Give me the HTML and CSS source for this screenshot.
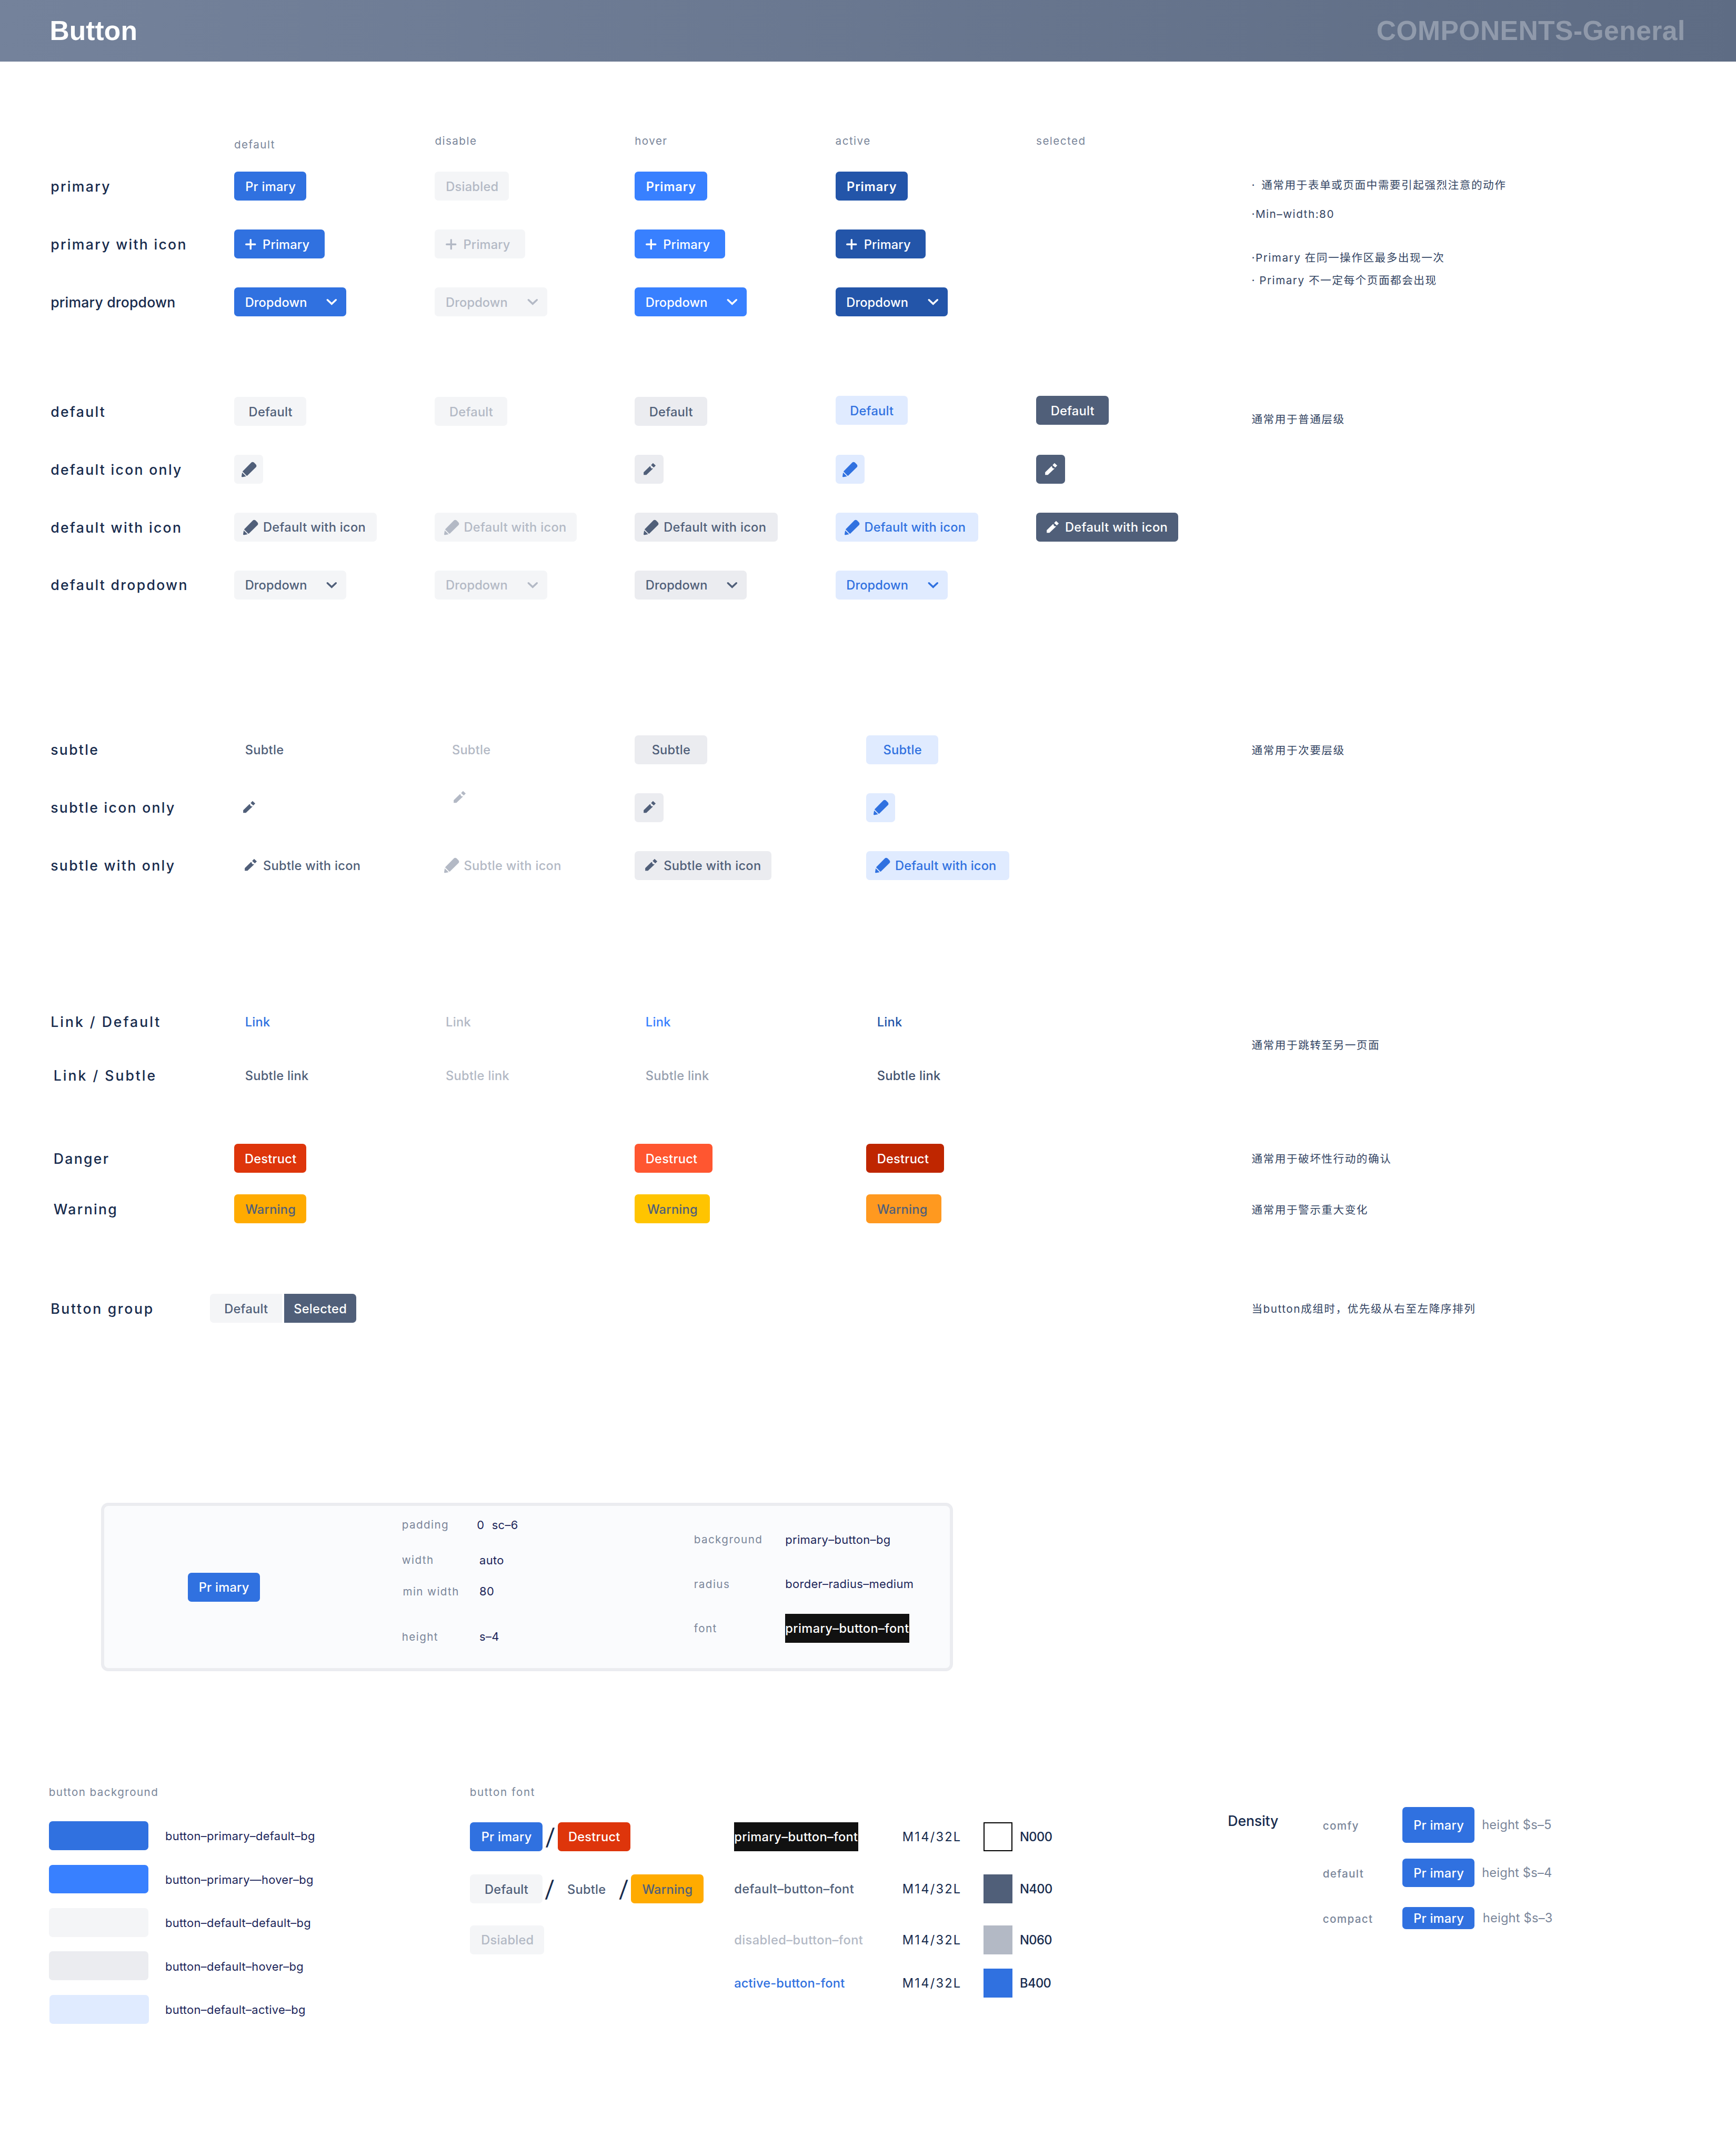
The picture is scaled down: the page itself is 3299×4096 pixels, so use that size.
FILE: index.html
```html
<!DOCTYPE html>
<html lang="zh-CN">
<head>
<meta charset="utf-8">
<title>Button</title>
<link rel="stylesheet" href="styles.css">
</head>
<body>
<svg class="sprite" aria-hidden="true">
  <symbol id="plus" viewBox="0 0 24 24"><path d="M12 2v20M2 12h20" fill="none" stroke="currentColor" stroke-width="4" stroke-linecap="round"/></symbol>
  <symbol id="chevron" viewBox="0 0 24 16"><path d="M2.7 3.2 12 12l9.3-8.8" fill="none" stroke="currentColor" stroke-width="4" stroke-linecap="round"/></symbol>
  <symbol id="pencil" viewBox="48 48 96 96"><path d="M59 115 101 74 105 78 106 84 112 90 119 89 121 91 77 133H59ZM108 68 121 54 139 71 126 84Z" fill="currentColor"/></symbol>
  <symbol id="marker" viewBox="48 48 96 96" overflow="visible"><path d="M56 108 111 52Q120 44 130 50L143 63Q151 73 144 81L87 137Q84 140 81 137L56 112Q54 110 56 108ZM52 117 78 142 56 147H52Q48 147 48 143Z" fill="currentColor"/></symbol>
</svg>

<header class="banner">
  <h1 class="banner-title">Button</h1>
  <span class="banner-crumb">COMPONENTS-General</span>
</header>

<main>
  <div class="row heads">
    <span></span><span class="head low">default</span><span class="head">disable</span><span class="head">hover</span><span class="head">active</span><span class="head">selected</span>
  </div>

  <section class="group g-primary">
    <div class="rows">
      <div class="row">
        <span class="label">primary</span>
        <button class="btn primary">Pr imary</button>
        <button class="btn muted w164">Dsiabled</button>
        <button class="btn primary-hover bold">Primary</button>
        <button class="btn primary-active bold">Primary</button>
      </div>
      <div class="row">
        <span class="label">primary with icon</span>
        <button class="btn primary add"><svg><use href="#plus"/></svg>Primary</button>
        <button class="btn muted add"><svg><use href="#plus"/></svg>Primary</button>
        <button class="btn primary-hover add"><svg><use href="#plus"/></svg>Primary</button>
        <button class="btn primary-active add"><svg><use href="#plus"/></svg>Primary</button>
      </div>
      <div class="row">
        <span class="label tight">primary dropdown</span>
        <button class="btn primary drop">Dropdown<svg><use href="#chevron"/></svg></button>
        <button class="btn muted drop">Dropdown<svg><use href="#chevron"/></svg></button>
        <button class="btn primary-hover drop">Dropdown<svg><use href="#chevron"/></svg></button>
        <button class="btn primary-active drop">Dropdown<svg><use href="#chevron"/></svg></button>
      </div>
    </div>
    <div class="notes">
      <p class="n1">· 通常用于表单或页面中需要引起强烈注意的动作</p>
      <p class="n2">·Min–width:80</p>
      <p class="n3">·Primary 在同一操作区最多出现一次</p>
      <p class="n4">· Primary 不一定每个页面都会出现</p>
    </div>
  </section>

  <section class="group g-default">
    <div class="rows">
      <div class="row">
        <span class="label">default</span>
        <button class="btn plain">Default</button>
        <button class="btn muted">Default</button>
        <button class="btn plain-hover">Default</button>
        <button class="btn plain-active raised">Default</button>
        <button class="btn selected raised">Default</button>
      </div>
      <div class="row">
        <span class="label">default icon only</span>
        <button class="btn plain icon"><svg><use href="#marker"/></svg></button>
        <span></span>
        <button class="btn plain-hover icon"><svg><use href="#pencil"/></svg></button>
        <button class="btn plain-active icon"><svg><use href="#marker"/></svg></button>
        <button class="btn selected icon"><svg><use href="#pencil"/></svg></button>
      </div>
      <div class="row">
        <span class="label">default with icon</span>
        <button class="btn plain edit"><svg><use href="#marker"/></svg>Default with icon</button>
        <button class="btn muted edit w314"><svg><use href="#marker"/></svg>Default with icon</button>
        <button class="btn plain-hover edit"><svg><use href="#marker"/></svg>Default with icon</button>
        <button class="btn plain-active edit close"><svg><use href="#marker"/></svg>Default with icon</button>
        <button class="btn selected edit w314"><svg><use href="#pencil"/></svg>Default with icon</button>
      </div>
      <div class="row">
        <span class="label">default dropdown</span>
        <button class="btn plain drop">Dropdown<svg><use href="#chevron"/></svg></button>
        <button class="btn muted drop">Dropdown<svg><use href="#chevron"/></svg></button>
        <button class="btn plain-hover drop">Dropdown<svg><use href="#chevron"/></svg></button>
        <button class="btn plain-active drop">Dropdown<svg><use href="#chevron"/></svg></button>
      </div>
    </div>
    <div class="notes"><p class="n5">通常用于普通层级</p></div>
  </section>

  <section class="group wide g-subtle">
    <div class="rows">
      <div class="row">
        <span class="label">subtle</span>
        <button class="btn bare link">Subtle</button>
        <button class="btn bare off">Subtle</button>
        <button class="btn plain-hover">Subtle</button>
        <button class="btn plain-active">Subtle</button>
      </div>
      <div class="row">
        <span class="label">subtle icon only</span>
        <button class="btn bare icon"><svg><use href="#pencil"/></svg></button>
        <button class="btn bare icon off lifted"><svg><use href="#pencil"/></svg></button>
        <button class="btn plain-hover icon"><svg><use href="#pencil"/></svg></button>
        <button class="btn plain-active icon"><svg><use href="#marker"/></svg></button>
      </div>
      <div class="row">
        <span class="label">subtle with only</span>
        <button class="btn bare edit"><svg><use href="#pencil"/></svg>Subtle with icon</button>
        <button class="btn bare off edit"><svg><use href="#marker"/></svg>Subtle with icon</button>
        <button class="btn plain-hover edit w302"><svg><use href="#pencil"/></svg>Subtle with icon</button>
        <button class="btn plain-active edit close"><svg><use href="#marker"/></svg>Default with icon</button>
      </div>
    </div>
    <div class="notes"><p class="n6">通常用于次要层级</p></div>
  </section>

  <section class="group wide g-link">
    <div class="rows">
      <div class="row">
        <span class="label airy">Link / Default</span>
        <a class="btn link blue">Link</a>
        <a class="btn link off">Link</a>
        <a class="btn link sky">Link</a>
        <a class="btn link navy">Link</a>
      </div>
      <div class="row">
        <span class="label airy indent">Link / Subtle</span>
        <a class="btn link bare">Subtle link</a>
        <a class="btn link off">Subtle link</a>
        <a class="btn link grey">Subtle link</a>
        <a class="btn link ink">Subtle link</a>
      </div>
    </div>
    <div class="notes"><p class="n7">通常用于跳转至另一页面</p></div>
  </section>

  <section class="group wide g-alert">
    <div class="rows">
      <div class="row">
        <span class="label indent">Danger</span>
        <button class="btn danger">Destruct</button>
        <span></span>
        <button class="btn danger-hover left w172">Destruct</button>
        <button class="btn danger-active left w172">Destruct</button>
      </div>
      <div class="row">
        <span class="label indent">Warning</span>
        <button class="btn warning">Warning</button>
        <span></span>
        <button class="btn warning-hover w166">Warning</button>
        <button class="btn warning-active left w166">Warning</button>
      </div>
    </div>
    <div class="notes"><p class="n8">通常用于破坏性行动的确认</p><p class="n9">通常用于警示重大变化</p></div>
  </section>

  <section class="group g-set">
    <div class="rows">
      <div class="row">
        <span class="label set">Button group</span>
        <div class="btn-set"><button class="btn plain first">Default</button><button class="btn selected last">Selected</button></div>
      </div>
    </div>
    <div class="notes"><p class="n10">当button成组时，优先级从右至左降序排列</p></div>
  </section>

  <section class="panel">
    <button class="btn primary">Pr imary</button>
    <dl class="spec sizes">
      <div class="s1"><dt>padding</dt><dd class="wide-gap">0 sc–6</dd></div>
      <div class="s2"><dt>width</dt><dd>auto</dd></div>
      <div class="s3"><dt>min width</dt><dd>80</dd></div>
      <div class="s4"><dt>height</dt><dd>s–4</dd></div>
    </dl>
    <dl class="spec tokens">
      <div><dt>background</dt><dd>primary–button–bg</dd></div>
      <div><dt>radius</dt><dd>border–radius–medium</dd></div>
      <div><dt>font</dt><dd><span class="chip">primary–button–font</span></dd></div>
    </dl>
  </section>

  <div class="foot">
    <section class="backgrounds">
      <h2 class="head">button background</h2>
      <div class="swatch-row"><span class="swatch primary"></span><span class="swatch-name">button–primary–default–bg</span></div>
      <div class="swatch-row"><span class="swatch primary-hover"></span><span class="swatch-name">button–primary—hover–bg</span></div>
      <div class="swatch-row"><span class="swatch plain"></span><span class="swatch-name">button–default–default–bg</span></div>
      <div class="swatch-row"><span class="swatch plain-hover"></span><span class="swatch-name">button–default–hover–bg</span></div>
      <div class="swatch-row last-row"><span class="swatch plain-active"></span><span class="swatch-name">button–default–active–bg</span></div>
    </section>

    <section class="fonts">
      <h2 class="head">button font</h2>
      <div class="font-row">
        <div class="samples"><button class="btn primary">Pr imary</button><span class="slash">/</span><button class="btn danger">Destruct</button></div>
        <div class="token"><span class="chip">primary–button–font</span></div>
        <span class="metric">M14/32L</span><span class="tone outline"></span><span class="tone-name">N000</span>
      </div>
      <div class="font-row f2">
        <div class="samples"><button class="btn plain">Default</button><span class="slash second">/</span><button class="btn bare mid">Subtle</button><span class="slash third">/</span><button class="btn warning">Warning</button></div>
        <div class="token slate">default–button–font</div>
        <span class="metric">M14/32L</span><span class="tone t400"></span><span class="tone-name">N400</span>
      </div>
      <div class="font-row f3">
        <div class="samples"><button class="btn muted w164">Dsiabled</button></div>
        <div class="token off">disabled–button–font</div>
        <span class="metric">M14/32L</span><span class="tone t060"></span><span class="tone-name">N060</span>
      </div>
      <div class="font-row f4">
        <div class="samples"></div>
        <div class="token blue">active-button-font</div>
        <span class="metric">M14/32L</span><span class="tone primary"></span><span class="tone-name">B400</span>
      </div>
    </section>

    <section class="density">
      <h2 class="density-title">Density</h2>
      <div class="density-rows">
        <div class="density-row"><span class="size">comfy</span><button class="btn primary h80">Pr imary</button><span class="height">height $s–5</span></div>
        <div class="density-row d2"><span class="size">default</span><button class="btn primary">Pr imary</button><span class="height">height $s–4</span></div>
        <div class="density-row d3"><span class="size">compact</span><button class="btn primary h48">Pr imary</button><span class="height nudge">height $s–3</span></div>
      </div>
    </section>
  </div>
</main>
</body>
</html>
```
FILE: styles.css
```css
/* 1rem = 10 design pixels */
html { font-size: 8.5911px; }
* { box-sizing: border-box; }
body {
  margin: 0;
  width: 384rem;
  height: 476.7rem;
  overflow: hidden;
  background: #fff;
  color: #172b4d;
  font-family: Inter, "Noto Sans CJK SC", sans-serif;
}
h1, h2, p, dl, dd { margin: 0; font-weight: inherit; }
.sprite { display: none; }

.banner {
  display: flex;
  align-items: center;
  justify-content: space-between;
  height: 13.6rem;
  padding: .2rem 11.2rem 0 11rem;
  background: linear-gradient(90deg, #74829b, #5e6c84);
  font: 700 6rem/1 "Liberation Sans", Arial, sans-serif;
}
.banner-title { font-size: 6rem; letter-spacing: .01rem; color: #fff; }
.banner-crumb { letter-spacing: .055rem; color: rgba(255, 255, 255, .3); }

/* state matrix */
.row {
  display: grid;
  grid-template-columns: 40.6rem 44.4rem 44.2rem 44.4rem 44.4rem auto;
  align-items: center;
  height: 6.4rem;
}
.wide .row { grid-template-columns: 40.6rem 44.4rem 44.2rem 51.2rem auto; }
.heads { margin-left: 11.2rem; padding-top: 15.3rem; height: 19.5rem; }
.head { font-size: 2.4rem; line-height: 3rem; letter-spacing: .17rem; color: #7a869a; }
.head.low { margin: 1.6rem 0 0; }
.group { display: flex; padding-left: 11.2rem; }
.rows { display: grid; gap: 6.4rem; width: 265.65rem; align-content: start; }
.label { font-size: 3.1rem; font-weight: 500; letter-spacing: .265rem; white-space: nowrap; }
.label.tight { letter-spacing: .018rem; }
.label.airy { letter-spacing: .345rem; }
.label.set { letter-spacing: .31rem; }
.label.indent { padding-left: .65rem; }

.g-primary { margin-top: 4.9rem; }
.g-default { margin-top: 17.8rem; }
.g-subtle { margin-top: 30rem; }
.g-link { margin-top: 28.2rem; }
.g-link .rows { gap: 5.45rem; }
.g-alert { margin-top: 11.95rem; }
.g-alert .rows { gap: 4.8rem; }
.g-set { margin-top: 15.6rem; }

/* usage notes */
.notes { height: 0; font-size: 2.4rem; line-height: 4rem; letter-spacing: .18rem; color: #344563; white-space: nowrap; }
.n1 { margin-top: .95rem; word-spacing: .45rem; }
.n2 { margin-top: 2.5rem; }
.n3 { margin-top: 5.6rem; }
.n4 { margin-top: 1rem; }
.n5 { margin-top: 3.05rem; }
.n6 { margin-top: 1.4rem; }
.n7 { margin-top: 6.45rem; }
.n8 { margin-top: 1.35rem; }
.n9 { margin-top: 7.3rem; }
.n10 { margin-top: 1.4rem; }

/* buttons */
.btn {
  display: flex;
  flex: none;
  align-items: center;
  justify-content: center;
  width: 16rem;
  height: 6.4rem;
  padding: .15rem 0 0 .1rem;
  border: 0;
  border-radius: .8rem;
  background: none;
  font: 500 2.75rem/1 Inter, sans-serif;
  letter-spacing: .028rem;
  white-space: nowrap;
}
.btn svg { flex: none; overflow: visible; margin-top: -.15rem; }
.btn.bold { font-weight: 600; letter-spacing: .097rem; }
.btn.left { justify-content: flex-start; padding-left: 2.4rem; }
.btn.add { justify-content: flex-start; width: 20rem; padding-left: 2.4rem; gap: 1.5rem; letter-spacing: .017rem; }
.add svg { width: 2.4rem; height: 2.4rem; }
.btn.drop { justify-content: space-between; width: 24.8rem; padding-left: 2.4rem; padding-right: 2rem; letter-spacing: .015rem; }
.drop svg { width: 2.4rem; height: 1.6rem; }
.btn.icon { width: 6.4rem; padding-left: 0; }
.btn.edit { justify-content: flex-start; width: 31.6rem; padding-left: 2rem; gap: 1.2rem; letter-spacing: .036rem; }
.edit svg, .icon svg { width: 3.2rem; height: 3.2rem; }
.btn.edit.close { letter-spacing: .018rem; }
.btn.link { justify-content: flex-start; padding-left: 2.4rem; letter-spacing: .035rem; }
.raised { margin-top: -.4rem; }
.lifted { margin: -4.4rem 0 0 2.15rem; }
.btn.w164 { width: 16.4rem; }
.btn.w166 { width: 16.6rem; }
.btn.w172 { width: 17.2rem; }
.btn.w302 { width: 30.2rem; }
.btn.w314 { width: 31.4rem; }
.btn.h80 { height: 8rem; }
.btn.h48 { height: 4.8rem; }

.primary { background: #3071e0; color: #fff; }
.primary-hover { background: #3880ff; color: #fff; }
.primary-active { background: #2355a9; color: #fff; }
.muted { background: #f4f5f7; color: #b3b9c5; }
.plain { background: #f4f5f7; color: #505f79; }
.plain-hover { background: #ebecf0; color: #505f79; }
.plain-active { background: #e0ebff; color: #3071e0; }
.selected { background: #505f79; color: #fff; }
.bare { color: #505f79; }
.danger { background: #de350b; color: #fff; }
.danger-hover { background: #ff5630; color: #fff; }
.danger-active { background: #bf2600; color: #fff; }
.warning { background: #ffab00; color: #505f79; }
.warning-hover { background: #ffc400; color: #505f79; }
.warning-active { background: #ff991f; color: #505f79; }
.off { color: #b3b9c5; }
.blue { color: #3071e0; }
.sky { color: #3880ff; }
.navy { color: #2355a9; }
.grey { color: #97a0af; }
.ink { color: #42526e; }
.slate { color: #505f79; }

.btn-set { display: flex; gap: .4rem; margin-left: -5.4rem; }
.btn-set .first { border-radius: .8rem 0 0 .8rem; }
.btn-set .last { border-radius: 0 .8rem .8rem 0; }

/* anatomy panel */
.panel {
  display: flex;
  width: 188.4rem;
  height: 37.2rem;
  margin: 39.8rem 0 0 22.4rem;
  padding-left: 18.4rem;
  border: .8rem solid #ebecf0;
  border-radius: 1.6rem;
  background: #fafbfd;
}
.panel > .btn { align-self: center; }
.spec > div { display: flex; align-items: center; }
.spec dt { flex: none; font-size: 2.4rem; letter-spacing: .165rem; color: #7a869a; }
.spec dd { font-size: 2.55rem; letter-spacing: .04rem; color: #1b2559; white-space: nowrap; }
.sizes { width: 96rem; padding: 2.15rem 0 0 31.4rem; }
.sizes > div { height: 4rem; }
.sizes dt { width: 17.15rem; }
.sizes .s1 dt { width: 16.6rem; }
.sizes .s2 { margin-top: 3.8rem; }
.sizes .s3 { margin-top: 2.9rem; }
.sizes .s3 dt { padding-left: .2rem; }
.sizes .s4 { margin-top: 6rem; }
.wide-gap { word-spacing: .9rem; }
.tokens { padding-top: 4.2rem; }
.tokens > div { height: 6.4rem; margin-bottom: 3.4rem; }
.tokens dt { width: 20.2rem; }
.chip {
  display: block;
  width: 27.4rem;
  height: 6.4rem;
  background: #111;
  color: #fff;
  font-size: 2.75rem;
  font-weight: 500;
  line-height: 6.5rem;
  letter-spacing: .043rem;
  white-space: nowrap;
}

/* token reference */
.foot { display: flex; align-items: flex-start; margin-top: 25.3rem; padding-left: 10.8rem; }
.backgrounds { width: 93.2rem; }
.backgrounds .head { margin-bottom: 4.9rem; letter-spacing: .165rem; }
.swatch-row {
  display: flex;
  align-items: center;
  gap: 3.75rem;
  height: 6.4rem;
  margin: 0 0 3.2rem;
  font-size: 2.55rem;
  letter-spacing: .035rem;
  color: #1b2559;
}
.last-row { margin-left: .2rem; gap: 3.55rem; }
.swatch { width: 22rem; height: 6.4rem; border-radius: .8rem; }
.swatch-name { padding-top: .15rem; }

.fonts { width: 167.6rem; }
.fonts .head { margin: 0 0 5.1rem -.1rem; letter-spacing: .195rem; }
.font-row { display: flex; align-items: center; height: 6.4rem; }
.f2 { margin-top: 5.2rem; }
.f3 { margin-top: 4.8rem; }
.f4 { margin-top: 3.2rem; }
.samples { display: flex; align-items: center; width: 58.4rem; }
.slash { width: 3.4rem; text-align: center; font-size: 5rem; line-height: 1; transform: skewX(-5deg); }
.slash.second { width: 3.1rem; }
.slash.third { width: 3.3rem; }
.btn.mid { width: 13.2rem; }
.token { width: 37.2rem; font-size: 2.75rem; font-weight: 500; letter-spacing: .05rem; white-space: nowrap; }
.token.blue { letter-spacing: .02rem; }
.metric { width: 18rem; font-size: 2.75rem; letter-spacing: .26rem; }
.tone { width: 6.4rem; height: 6.4rem; }
.outline { border: .24rem solid #000; }
.t400 { background: #505f79; }
.t060 { background: #b3b9c5; }
.tone-name { margin-left: 1.6rem; font-size: 2.75rem; font-weight: 500; letter-spacing: -.07rem; }

.density { display: flex; padding-top: 4.7rem; }
.density-title { width: 21rem; padding-top: 1.1rem; font-size: 3.1rem; font-weight: 500; line-height: 4rem; letter-spacing: -.016rem; }
.density-row { display: flex; align-items: center; }
.d2 { margin-top: 3.4rem; }
.d3 { margin-top: 4.4rem; }
.size { width: 17.6rem; padding-top: .3rem; font-size: 2.4rem; font-weight: 500; letter-spacing: .155rem; color: #7a869a; }
.height { margin-left: 1.6rem; font-size: 2.75rem; letter-spacing: .025rem; color: #7a869a; white-space: nowrap; }
.nudge { margin-left: 1.8rem; }
```
